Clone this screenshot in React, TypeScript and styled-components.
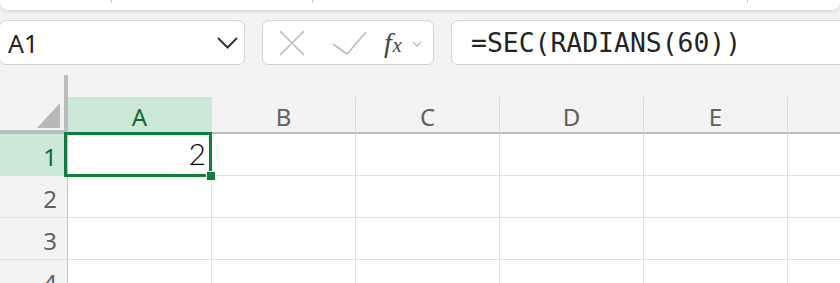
import React from 'react';
import styled, {createGlobalStyle} from "styled-components";

const GlobalStyle = createGlobalStyle`
    html, body {
        margin: 0;
        padding: 0;
        background: #f3f3f3;
        overflow: hidden;
        font-family: "Noto Sans", "Open Sans", sans-serif;
    }
`;

const Page = styled.div`
    width: 840px;
    height: 283px;
    overflow: hidden;
`;

/* ribbon (only its bottom edge is visible) */
const Ribbon = styled.div`
    display: flex;
    height: 10px;
    background: #ffffff;
    border-radius: 0 0 8px 8px;
    box-shadow: 0 1px 4px rgba(0, 0, 0, 0.16);
`;

const RibbonGroup = styled.div<{ $width: number }>`
    width: ${p => p.$width}px;
    height: 3px;
    border-right: 1px solid #c8c8c8;
`;

const FormulaBar = styled.div`
    display: flex;
    height: 45px;
    margin-top: 10px;
    gap: 17px;
`;

const Box = styled.div`
    display: flex;
    align-items: center;
    box-sizing: border-box;
    height: 45px;
    background: #ffffff;
    border: 1px solid #d1d1d1;
    border-radius: 7px;
`;

const NameBox = styled(Box)`
    width: 246px;
    margin-left: -1px;
    padding: 0 6px 0 8px;
    justify-content: space-between;
    font-size: 25px;
    color: #242424;
`;

const Controls = styled(Box)`
    width: 172px;
    padding-left: 16px;
`;

const FormulaInput = styled(Box)`
    flex: 1;
    margin-right: -12px;
    padding-left: 19px;
    font-family: "DejaVu Sans Mono", "Liberation Mono", monospace;
    font-size: 26.4px;
    color: #242424;
`;

const Fx = styled.span`
    display: flex;
    align-items: baseline;
    margin-left: 17px;
    font-family: "Liberation Serif", serif;
    font-style: italic;
    color: #424242;
    font-size: 28px;
    line-height: 1;

    sub {
        font-size: 20px;
        margin-left: 1px;
        vertical-align: baseline;
    }
`;

const Sheet = styled.div`
    display: grid;
    grid-template-columns: 68px repeat(6, 144px);
    grid-template-rows: 22px 37px repeat(4, 42px);
    margin-top: 10px;
`;

const Corner = styled.div`
    grid-row: 1 / span 2;
    grid-column: 1;
    box-sizing: border-box;
    border-right: 4px solid #bdbdbd;
    border-bottom: 4px solid #bdbdbd;
    display: flex;
    align-items: flex-end;
    justify-content: flex-end;
    padding: 0 4px 2px 0;
`;

const CornerMark = styled.div`
    width: 23px;
    height: 25px;
    background: #b8b8b8;
    clip-path: polygon(100% 0, 100% 100%, 0 100%);
`;

const ColHeader = styled.div<{ $active?: boolean }>`
    grid-row: 2;
    box-sizing: border-box;
    display: flex;
    align-items: center;
    justify-content: center;
    padding-top: 3px;
    border-right: 1px solid ${p => p.$active ? "#cbe9d6" : "#dadada"};
    border-bottom: 2px solid #bdbdbd;
    background: ${p => p.$active ? "#cbe9d6" : "#f3f3f3"};
    color: ${p => p.$active ? "#0e6b38" : "#616161"};
    font-size: 24px;
`;

const RowHeader = styled.div<{ $active?: boolean }>`
    grid-column: 1;
    box-sizing: border-box;
    display: flex;
    align-items: center;
    justify-content: flex-end;
    padding: 3px 10px 0 0;
    border-right: 1px solid #c4c4c4;
    border-bottom: 1px solid ${p => p.$active ? "#cbe9d6" : "#e0e0e0"};
    background: ${p => p.$active ? "#cbe9d6" : "#f3f3f3"};
    color: ${p => p.$active ? "#0e6b38" : "#616161"};
    font-size: 24px;
`;

const Cell = styled.div<{ $selected?: boolean }>`
    position: relative;
    box-sizing: border-box;
    display: flex;
    align-items: flex-end;
    justify-content: flex-end;
    padding: 0 5px 7px 0;
    background: #ffffff;
    border-right: 1px solid #e1e1e1;
    border-bottom: 1px solid #e1e1e1;
    font-family: Lato, Roboto, sans-serif;
    font-weight: 300;
    font-size: 30px;
    line-height: 1;
    color: #000000;

    ${p => p.$selected && `
        z-index: 2;
        &::after {
            content: "";
            position: absolute;
            left: -4px;
            top: -2px;
            right: -1px;
            bottom: -2px;
            border: 3px solid #107c41;
        }
    `}
`;

const FillHandle = styled.span`
    position: absolute;
    right: -4px;
    bottom: -5px;
    width: 8px;
    height: 8px;
    background: #107c41;
    box-shadow: 0 0 0 1px #ffffff;
    z-index: 3;
`;

const columns = ["A", "B", "C", "D", "E", ""];
const rows = [1, 2, 3, 4];

const App = () => {
    return (
        <Page>
            <GlobalStyle/>
            <Ribbon>
                <RibbonGroup $width={111}/>
                <RibbonGroup $width={200}/>
                <RibbonGroup $width={434}/>
            </Ribbon>

            <FormulaBar>
                <NameBox>
                    <span>A1</span>
                    <svg width="21" height="12" viewBox="0 0 21 12">
                        <polyline points="1,1 10.5,10.5 20,1" fill="none" stroke="#333" strokeWidth="2"/>
                    </svg>
                </NameBox>
                <Controls>
                    <svg width="26" height="26" viewBox="0 0 26 26">
                        <path d="M1 1 L25 25 M25 1 L1 25" stroke="#bdbdbd" strokeWidth="1.7" fill="none"/>
                    </svg>
                    <svg width="35" height="24" viewBox="0 0 35 24" style={{marginLeft: 27}}>
                        <polyline points="1,13 15,23 34,1" fill="none" stroke="#bdbdbd" strokeWidth="1.7"/>
                    </svg>
                    <Fx>f<sub>x</sub></Fx>
                    <svg width="10" height="6" viewBox="0 0 10 6" style={{marginLeft: 10, marginTop: 2}}>
                        <polyline points="1,1 5,5 9,1" fill="none" stroke="#bdbdbd" strokeWidth="1.3"/>
                    </svg>
                </Controls>
                <FormulaInput>=SEC(RADIANS(60))</FormulaInput>
            </FormulaBar>

            <Sheet>
                <Corner><CornerMark/></Corner>
                {columns.map((c, i) => (
                    <ColHeader key={i} $active={c === "A"}>{c}</ColHeader>
                ))}
                {rows.map(r => (
                    <React.Fragment key={r}>
                        <RowHeader $active={r === 1}>{r}</RowHeader>
                        {columns.map((c, i) => (
                            r === 1 && c === "A"
                                ? <Cell key={i} $selected>2<FillHandle/></Cell>
                                : <Cell key={i}/>
                        ))}
                    </React.Fragment>
                ))}
            </Sheet>
        </Page>
    );
};

export default App;
